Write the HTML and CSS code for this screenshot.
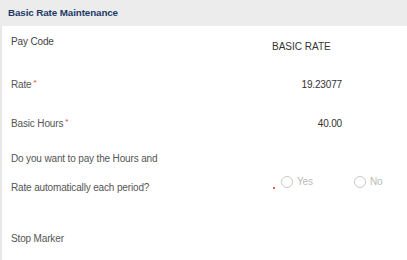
FILE: index.html
```html
<!DOCTYPE html>
<html lang="en">
<head>
    <meta charset="UTF-8">
    <meta name="viewport" content="width=device-width, initial-scale=1.0">
    <title>Basic Rate Maintenance</title>
    <link rel="stylesheet" href="styles.css">
</head>
<body>
    <div class="panel-header">Basic Rate Maintenance</div>

    <div class="panel-body">
        <div class="row row-top">
            <div class="label label-strong">Pay Code</div>
            <div class="value value-text">BASIC RATE</div>
        </div>

        <div class="row row-rate">
            <div class="label">Rate<span class="req">*</span></div>
            <div class="value value-num">19.23077</div>
        </div>

        <div class="row row-hours">
            <div class="label">Basic Hours<span class="req">*</span></div>
            <div class="value value-num">40.00</div>
        </div>

        <div class="row row-question">
            <div class="label label-wrap">Do you want to pay the Hours and<br>Rate automatically each period?</div>
            <div class="value radio-group">
                <span class="req-dot"></span>
                <label class="radio"><span class="radio-circle"></span>Yes</label>
                <label class="radio"><span class="radio-circle"></span>No</label>
            </div>
        </div>

        <div class="row row-stop">
            <div class="label">Stop Marker</div>
        </div>
    </div>
</body>
</html>
```

FILE: styles.css
```css
body {
    margin: 0;
    font-family: "Liberation Sans", Arial, sans-serif;
    font-size: 10px;
    letter-spacing: -0.15px;
    color: #555;
    background: #fff;
}
.panel-header {
    height: 26px;
    line-height: 26px;
    padding-left: 8px;
    background-color: #ececec;
    color: #1e3a66;
    font-weight: bold;
    font-size: 9.8px;
    letter-spacing: -0.1px;
}
.panel-body {
    border-left: 2px solid #e8e8e8;
    padding-left: 9px;
    height: 234px;
}
.row {
    display: flex;
}
.label {
    width: 261px;
    flex-shrink: 0;
    line-height: 14px;
}
.label-strong {
    color: #444;
}
.value {
    width: 70px;
    line-height: 14px;
    color: #333;
}
.value-text {
    letter-spacing: 0;
}
.value-num {
    text-align: right;
    padding-right: 1px;
}
.row-top {
    height: 31px;
    padding-top: 9px;
}
.row-top .value {
    margin-top: 5px;
}
.row-rate {
    height: 38px;
    align-items: center;
}
.row-hours {
    height: 40px;
    align-items: center;
}
.row-question {
    height: 58px;
}
.label-wrap {
    line-height: 29px;
}
.req {
    color: #e53935;
    font-size: 8px;
    vertical-align: top;
    margin-left: 2px;
    line-height: 10px;
}
.radio-group {
    position: relative;
    display: flex;
    align-items: center;
    align-self: flex-end;
    margin-bottom: 13px;
    height: 14px;
    width: 130px;
    padding-left: 9px;
}
.req-dot {
    position: absolute;
    left: 1px;
    top: 12px;
    width: 2px;
    height: 2px;
    background: #f05a5a;
}
.radio {
    display: flex;
    align-items: center;
    flex-shrink: 0;
    color: #bbb;
    width: 73px;
}
.radio-circle {
    width: 10px;
    height: 10px;
    border: 1px solid #c8c8c8;
    border-radius: 50%;
    margin-right: 4px;
}
.row-stop {
    padding-top: 30px;
}
```
